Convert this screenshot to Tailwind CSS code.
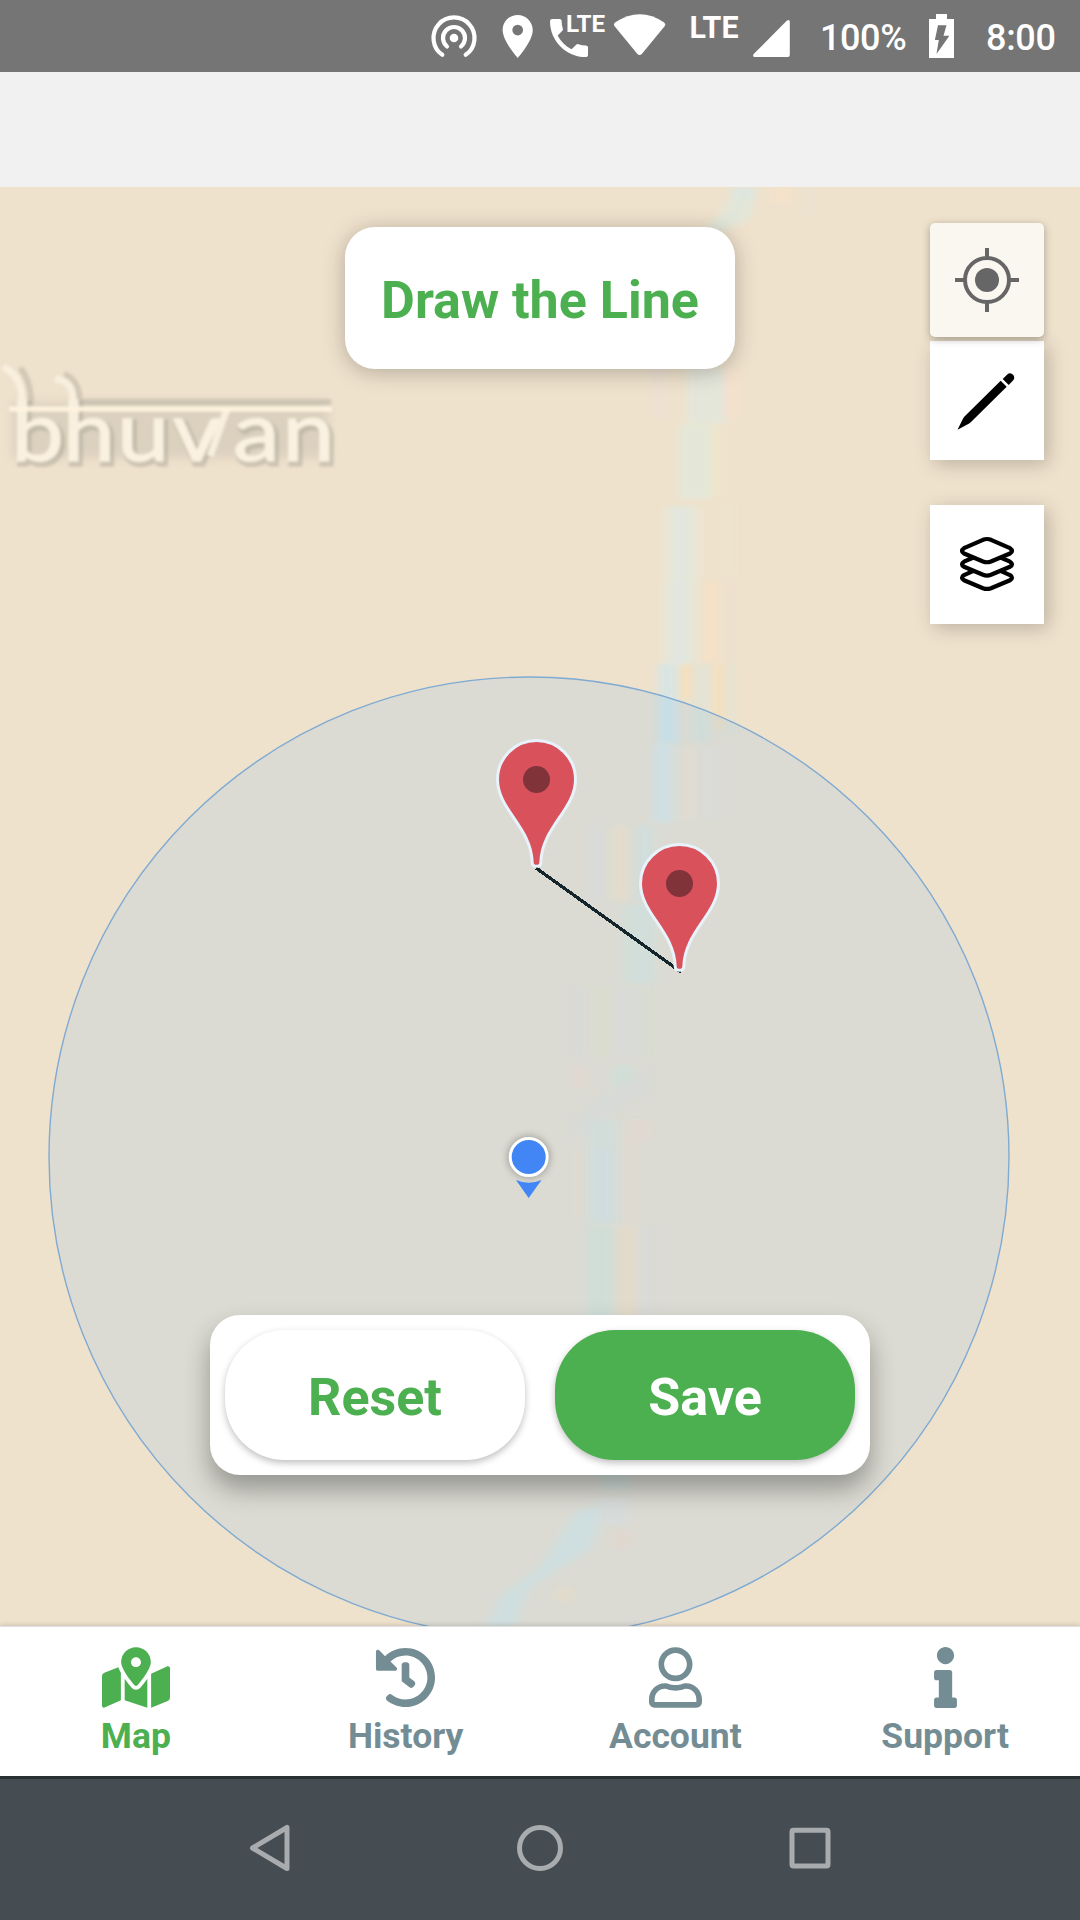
<!DOCTYPE html>
<html lang="en">
<head>
<meta charset="utf-8">
<title>Map</title>
<script src="https://cdn.jsdelivr.net/npm/@tailwindcss/browser@4"></script>
</head>
<body class="flex h-[1920px] w-[1080px] flex-col overflow-hidden bg-white font-[Roboto,sans-serif]">
  <!-- Status bar -->
  <header class="flex h-[72px] shrink-0 items-center bg-[#757575] pl-[430px] text-white">
    <svg class="h-[72px] w-[48px] shrink-0" viewBox="430 0 48 72" fill="none" stroke="#fff" stroke-width="4.2" stroke-linecap="round">
      <path d="M442.300 54.800A20.500 20.500 0 1 1 465.700 54.800M447 46.500A11 11 0 1 1 461 46.500"/>
      <circle cx="454" cy="38" r="4.300" fill="#fff" stroke="none"/>
    </svg>
    <svg class="ml-[24px] h-[72px] w-[32px] shrink-0" viewBox="502 0 32 72" fill="#fff">
      <path transform="translate(491.900 10.700) scale(2.150)" d="M12 2C8.130 2 5 5.130 5 9c0 5.250 7 13 7 13s7-7.750 7-13c0-3.870-3.130-7-7-7zm0 9.500a2.500 2.500 0 0 1 0-5 2.500 2.500 0 0 1 0 5z"/>
    </svg>
    <svg class="ml-[14px] h-[72px] w-[58px] shrink-0" viewBox="548 0 58 72" fill="#fff">
      <path transform="translate(543.700 12.700) scale(2.110)" d="M6.620 10.790c1.440 2.830 3.760 5.140 6.590 6.590l2.200-2.200c.27-.27.67-.36 1.020-.24 1.120.37 2.330.57 3.570.57.55 0 1 .45 1 1V20c0 .55-.45 1-1 1-9.390 0-17-7.610-17-17 0-.55.45-1 1-1h3.500c.55 0 1 .45 1 1 0 1.250.2 2.450.57 3.570.11.35.03.74-.25 1.020l-2.200 2.200z"/>
      <text x="566" y="32.300" font-size="23.500" font-weight="700" textLength="39" lengthAdjust="spacingAndGlyphs">LTE</text>
    </svg>
    <svg class="ml-[6px] h-[72px] w-[56px] shrink-0" viewBox="612 0 56 72" fill="#fff">
      <path d="M615 22.500Q640 6 664.200 22.500Q666.200 24 664.800 26L642 53.700Q639.600 56.500 637.200 53.700L614.400 26Q613 24 615 22.500z"/>
    </svg>
    <svg class="ml-[21px] h-[72px] w-[50px] shrink-0" viewBox="689 0 50 72" fill="#fff">
      <text x="689.500" y="37.500" font-size="30.500" font-weight="700" textLength="49" lengthAdjust="spacingAndGlyphs">LTE</text>
    </svg>
    <svg class="ml-[13px] h-[72px] w-[40px] shrink-0" viewBox="752 0 40 72" fill="#fff">
      <path d="M786.700 20.800Q789.800 18.500 789.800 22V55Q789.800 57 787.800 57H755Q752 57 753.700 54z"/>
    </svg>
    <span class="ml-[28px] w-[86px] shrink-0 pt-[3px] text-[36px] font-medium leading-none tracking-[-0.4px]">100%</span>
    <svg class="ml-[22px] h-[72px] w-[27px] shrink-0" viewBox="928 0 27 72">
      <path fill="#fff" d="M936 14h11v5h7v39h-25V19h7z"/>
      <path fill="#757575" d="M938 25.300h8.500l-3 10.500h5.900L936.500 54l2.300-14h-3.900z"/>
    </svg>
    <span class="ml-[31px] shrink-0 pt-[3px] text-[36px] font-medium leading-none tracking-[-0.3px]">8:00</span>
  </header>
  <div class="h-[115px] shrink-0 bg-[#f1f1f1]"></div>

  <!-- Map canvas -->
  <main class="relative h-[1439px] shrink-0 overflow-hidden bg-[#efe2cd]">
    <svg class="absolute inset-0 h-[1439px] w-[1080px]" viewBox="0 187 1080 1439">
      <defs>
        <filter id="soft" x="-10%" y="-5%" width="120%" height="110%" color-interpolation-filters="sRGB"><feGaussianBlur stdDeviation="4.500 2"/></filter>
        <filter id="blur" x="-20%" y="-20%" width="140%" height="140%" color-interpolation-filters="sRGB"><feGaussianBlur stdDeviation="1.500"/></filter>
        <filter id="haze" x="-20%" y="-30%" width="140%" height="160%" color-interpolation-filters="sRGB"><feGaussianBlur stdDeviation="5"/></filter>
        <filter id="dotshadow" x="-50%" y="-50%" width="200%" height="200%"><feGaussianBlur stdDeviation="4"/></filter>
        <g id="pin">
          <path d="M-39 0A39 39 0 0 1 39 0C39 30 5 48 4.300 83Q4.300 86.800 0 86.800Q-4.300 86.800-4.300 83C-5 48-39 30-39 0z" fill="#d9525b" stroke="#e7f2fb" stroke-width="3"/>
          <circle r="13.500" fill="#81333a"/>
        </g>
      </defs>
      <!-- River north of the range circle -->
      <g filter="url(#soft)">
        <path d="M735 187H758L750 218L722 232H702L722 212z" fill="#e2e6d8"/>
        <path d="M732 187h20v12h-20z" fill="#dce6df"/><path d="M774 187h16v16h-16z" fill="#f5e2c9"/><path d="M804 187h10v28h-10z" fill="#ece2d2"/>
        <path d="M653 368h11v50h-11z" fill="#ece0d3"/><path d="M687 368h40v55h-40z" fill="#e4e6da"/><path d="M725 368h9v50h-9z" fill="#f6e0cc"/>
        <path d="M679 424h32v75h-32z" fill="#e4e7d7"/><path d="M711 424h12v72h-12z" fill="#ede5cb"/>
        <path d="M665 506h34v74h-34z" fill="#e7e6d6"/><path d="M675 506h12v74h-12z" fill="#e1e6df"/><path d="M725 502h9v74h-9z" fill="#ebe5cc"/>
        <path d="M663 580h33v86h-33z" fill="#e6e6d7"/><path d="M672 580h16v86h-16z" fill="#e1e6e0"/><path d="M705 582h12v80h-12z" fill="#f6e0c4"/><path d="M725 582h9v80h-9z" fill="#ecdfcf"/>
        <path d="M658 664h20v80h-20z" fill="#d9e5e3"/><path d="M681 664h11v34h-11z" fill="#f5dfbb"/><path d="M692 664h18v78h-18z" fill="#e3e3d4"/><path d="M714 664h10v66h-10z" fill="#f5dfbc"/><path d="M727 664h7v70h-7z" fill="#e3e3d5"/>
      </g>

      <!-- Map watermark -->
      <path d="M12 402H328V458H12z" fill="#c4bdae" opacity=".45" filter="url(#haze)"/>
      <g filter="url(#blur)">
        <g fill="none" stroke="#b9b2a3" stroke-width="6" opacity=".55">
          <path d="M20 368Q31 380 31 405M64 374Q80 380 80 404M82 402H331"/>
        </g>
        <text transform="scale(1.12 1)" font-family="Lato, sans-serif" font-size="84" font-weight="400" y="464" x="12 58 106.500 156 210 254" fill="#aaa496" stroke="#aaa496" stroke-width="5" opacity=".5">bhuvan</text>
        <text transform="scale(1.120 1)" font-family="Lato, sans-serif" font-size="84" font-weight="400" y="461" x="10 56 104.500 154 208 252" fill="#faf1e1" stroke="#faf1e1" stroke-width="1.500">bhuvan</text>
        <path d="M3 367Q20 375 22 396V440M55 379Q73 380 73 400V430M227 409L210 456" fill="none" stroke="#f8efde" stroke-width="7"/>
        <path d="M9 409H332" stroke="#fff4df" stroke-width="5"/>
      </g>

      <!-- Range circle -->
      <circle cx="529" cy="1157" r="480" fill="#46aaff" fill-opacity=".12" stroke="#7faad2" stroke-width="1.400"/>

      <!-- River inside the range circle -->
      <g filter="url(#soft)" opacity=".85">
        <path d="M653 744h22v78h-22z" fill="#d4e0de"/><path d="M653 744h16v78h-16z" fill="#cde0e6"/><path d="M684 747h9v72h-9z" fill="#e3dbd2"/><path d="M703 747h16v72h-16z" fill="#dadbd9"/>
        <path d="M588 825h16v78h-16z" fill="#d9dbd9"/><path d="M612 826h16v74h-16z" fill="#e5dccb"/><path d="M636 826h17v74h-17z" fill="#cfdfdf"/>
        <path d="M622 906h34v78h-34z" fill="#d4dfd9"/><path d="M631 904h22v78h-22z" fill="#d0dfdc"/>
        <path d="M575 988h9v68h-9z" fill="#d8dad9"/><path d="M598 988h10v68h-10z" fill="#d9ddca"/><path d="M613 988h28v68h-28z" fill="#d9dbd9"/><path d="M642 988h10v68h-10z" fill="#d6ddd0"/>
        <path d="M574 1066h12v22h-12z" fill="#e2d8cf"/><path d="M612 1066h22v24h-22z" fill="#d0dfd9"/><path d="M600 1096L650 1068V1090L610 1116L574 1140V1120z" fill="#d8dad8"/>
        <path d="M587 1120h30v104h-30z" fill="#d1dedb"/><path d="M597 1150h12v70h-12z" fill="#cedde2"/><path d="M624 1120h13v104h-13z" fill="#e0d9cf"/><path d="M637 1120h15v20h-15z" fill="#e2d9d1"/><path d="M574 1150h6v70h-6z" fill="#e0dad2"/>
        <path d="M586 1226h27v250h-27z" fill="#cfded8"/><path d="M618 1226h18v150h-18z" fill="#e4dac8"/><path d="M642 1226h10v90h-10z" fill="#d8dad9"/>
        <path d="M600 1470h30v20h-30z" fill="#d0deda"/><path d="M575 1512L610 1500L592 1548L555 1572L528 1590L515 1626H486L500 1596L540 1566z" fill="#cedfe0"/><path d="M612 1530h20v18h-20z" fill="#e1d8cf"/><path d="M556 1588h18v14h-18z" fill="#e3dbca"/><path d="M598 1498h30v26h-30z" fill="#d7dcdc"/>
      </g>

      <path d="M536 868L681 972" stroke="#14252c" stroke-width="3.300" shape-rendering="crispEdges"/>
      <use href="#pin" x="536.500" y="779.500"/>
      <use href="#pin" x="679.500" y="883.500"/>

      <!-- Current position -->
      <circle cx="528.700" cy="1157" r="20" fill="#000" opacity=".35" filter="url(#dotshadow)"/>
      <circle cx="528.700" cy="1157" r="18.500" fill="#4285f4" stroke="#fff" stroke-width="3"/>
      <path d="M516 1180Q528.700 1185.500 541.500 1180L528.700 1198z" fill="#4285f4"/>
    </svg>

    <div class="absolute left-[345px] top-[40px] flex h-[142px] w-[390px] items-center justify-center rounded-[30px] bg-white pt-[5px] text-[52px] font-bold leading-none text-[#4caf50] shadow-[0_3px_22px_rgba(0,0,0,0.25)]">Draw the Line</div>

    <div class="absolute left-[930px] top-[36px] flex w-[114px] flex-col">
      <div class="relative z-10 h-[114px] rounded-[5px] bg-[#faf7f0] shadow-[0_2px_8px_rgba(0,0,0,0.3)]">
        <svg class="h-[114px] w-[114px]" viewBox="930 223 114 114" fill="none" stroke="#666" stroke-width="4">
          <circle cx="987" cy="280" r="22"/><circle cx="987" cy="280" r="12" fill="#666" stroke="none"/>
          <path d="M987 248v9M987 303v9M955 280h9M1010 280h9"/>
        </svg>
      </div>
      <div class="mt-[4px] h-[119px] bg-white shadow-[4px_4px_18px_rgba(0,0,0,0.22)]">
        <svg class="h-[119px] w-[114px]" viewBox="930 341 114 119">
          <path d="M957.500 429.700L963.200 418.300Q964 417 965 416L1000.700 380.700L1006.700 386.700L971 422Q970 423 968.700 423.700zM1002.700 379L1007 374.700Q1010.300 371.800 1013.500 375.200Q1015.300 378.300 1012.800 380.800L1008.700 385z"/>
        </svg>
      </div>
      <div class="mt-[45px] h-[119px] bg-white shadow-[4px_4px_18px_rgba(0,0,0,0.22)]">
        <svg class="h-[119px] w-[114px]" viewBox="930 505 114 119" fill="none" stroke="#000" stroke-width="4.200" stroke-linejoin="round">
          <path d="M983 539.800L964 548.200Q960 551 964 553.500L983 561.500Q987 563 991 561.500L1010 553.500Q1014 551 1010 548.200L991 539.800Q987 538.200 983 539.800z"/>
          <path d="M973.500 557.500L964 561.700Q960 564.300 964 566.800L983 574.800Q987 576.300 991 574.800L1010 566.800Q1014 564.300 1010 561.700L1000.500 557.500"/>
          <path d="M973.500 570.900L964 575.100Q960 577.700 964 580.200L983 588.200Q987 589.700 991 588.200L1010 580.200Q1014 577.700 1010 575.100L1000.500 570.900"/>
        </svg>
      </div>
    </div>

    <div class="absolute left-[210px] top-[1128px] flex h-[160px] w-[660px] gap-[30px] rounded-[30px] bg-white p-[15px] text-[52px] font-bold leading-none shadow-[0_14px_26px_rgba(0,0,0,0.32)]">
      <button class="flex-1 rounded-[60px] bg-white pt-[5px] text-[#4caf50] shadow-[0_3px_7px_rgba(0,0,0,0.25)]">Reset</button>
      <button class="flex-1 rounded-[60px] bg-[#4caf50] pt-[5px] text-white shadow-[0_3px_7px_rgba(0,0,0,0.25)]">Save</button>
    </div>
  </main>

  <!-- Tab bar -->
  <nav class="relative grid h-[150px] shrink-0 grid-cols-4 border-t border-[#e0e0e0] bg-white pl-px text-[35.5px] font-bold leading-[36px] text-[#748d94] shadow-[0_-1px_5px_rgba(0,0,0,0.15)]">
    <a class="flex flex-col items-center gap-[10px] pt-[20px] text-[#4caf50]">
      <svg class="h-[61px] w-[68px]" viewBox="0 0 576 512" fill="currentColor"><path d="M288 0c-69.590 0-126 56.410-126 126 0 56.260 82.350 158.800 113.900 196.020 6.390 7.540 17.820 7.540 24.200 0C331.650 284.800 414 182.260 414 126 414 56.410 357.590 0 288 0zm0 168c-23.200 0-42-18.800-42-42s18.800-42 42-42 42 18.800 42 42-18.800 42-42 42zM20.120 215.950A32.006 32.006 0 0 0 0 245.660v250.320c0 11.320 11.430 19.060 21.940 14.860L160 448V214.920c-8.840-15.980-16.070-31.540-21.250-46.420L20.120 215.950zM288 359.670c-14.070 0-27.380-6.180-36.510-16.960-19.660-23.200-40.570-49.620-59.490-76.720v182l192 64V266c-18.920 27.090-39.820 53.520-59.490 76.720-9.130 10.770-22.440 16.950-36.510 16.950zm266.060-198.510L416 224v288l139.880-55.950A31.996 31.996 0 0 0 576 426.340V176.020c0-11.320-11.430-19.060-21.940-14.860z"/></svg>
      <span>Map</span>
    </a>
    <a class="flex flex-col items-center gap-[10px] pt-[20px]">
      <svg class="h-[61px] w-[61px]" viewBox="0 0 512 512" fill="currentColor"><path d="M504 255.531c.253 136.640-111.180 248.372-247.820 248.468-59.015.042-113.223-20.530-155.822-54.911-11.077-8.940-11.905-25.541-1.839-35.607l11.267-11.267c8.609-8.609 22.353-9.551 31.891-1.984C173.062 425.135 212.781 440 256 440c101.705 0 184-82.311 184-184 0-101.705-82.311-184-184-184-48.814 0-93.149 18.969-126.068 49.932l50.754 50.754c10.080 10.080 2.941 27.314-11.313 27.314H24c-8.837 0-16-7.163-16-16V38.627c0-14.254 17.234-21.393 27.314-11.314l49.372 49.372C129.209 34.136 189.552 8 256 8c136.810 0 247.747 110.780 248 247.531zm-180.912 78.784l9.823-12.630c8.138-10.463 6.253-25.542-4.210-33.679L288 256.349V152c0-13.255-10.745-24-24-24h-16c-13.255 0-24 10.745-24 24v135.651l65.409 50.874c10.463 8.137 25.541 6.253 33.679-4.210z"/></svg>
      <span>History</span>
    </a>
    <a class="flex flex-col items-center gap-[10px] pt-[20px]">
      <svg class="h-[61px] w-[53px]" viewBox="0 0 448 512" fill="currentColor"><path d="M313.600 304c-28.700 0-42.500 16-89.600 16-47.100 0-60.800-16-89.600-16C60.200 304 0 364.200 0 438.400V464c0 26.500 21.500 48 48 48h352c26.500 0 48-21.500 48-48v-25.600c0-74.200-60.200-134.400-134.400-134.400zM400 464H48v-25.600c0-47.600 38.800-86.400 86.400-86.400 14.600 0 38.300 16 89.600 16 51.700 0 74.900-16 89.600-16 47.600 0 86.400 38.800 86.400 86.400V464zM224 288c79.500 0 144-64.500 144-144S303.500 0 224 0 80 64.500 80 144s64.500 144 144 144zm0-240c52.900 0 96 43.100 96 96s-43.100 96-96 96-96-43.100-96-96 43.100-96 96-96z"/></svg>
      <span>Account</span>
    </a>
    <a class="flex flex-col items-center gap-[10px] pt-[20px]">
      <svg class="h-[61px] w-[23px]" viewBox="0 0 192 512" fill="currentColor"><path d="M20 424.229h20V279.771H20c-11.046 0-20-8.954-20-20V212c0-11.046 8.954-20 20-20h112c11.046 0 20 8.954 20 20v212.229h20c11.046 0 20 8.954 20 20V492c0 11.046-8.954 20-20 20H20c-11.046 0-20-8.954-20-20v-47.771c0-11.046 8.954-20 20-20zM96 0C56.235 0 24 32.235 24 72s32.235 72 72 72 72-32.235 72-72S135.764 0 96 0z"/></svg>
      <span>Support</span>
    </a>
  </nav>

  <!-- System navigation -->
  <footer class="flex h-[144px] shrink-0 items-center justify-center gap-[210px] border-t-[3px] border-[#2b3336] bg-[#454c52] pb-[3px]">
    <svg class="h-[60px] w-[60px]" viewBox="240 1818 60 60" fill="none" stroke="#a9acae" stroke-width="5" stroke-linejoin="round"><path d="M287 1827.500V1868.500L252.500 1848z"/></svg>
    <svg class="h-[60px] w-[60px]" viewBox="510 1818 60 60" fill="none" stroke="#a9acae" stroke-width="5"><circle cx="540" cy="1848" r="20.500"/></svg>
    <svg class="h-[60px] w-[60px]" viewBox="780 1818 60 60" fill="none" stroke="#a9acae" stroke-width="5"><rect x="792" y="1830.300" width="36" height="35.700" rx="1.500"/></svg>
  </footer>
</body>
</html>
